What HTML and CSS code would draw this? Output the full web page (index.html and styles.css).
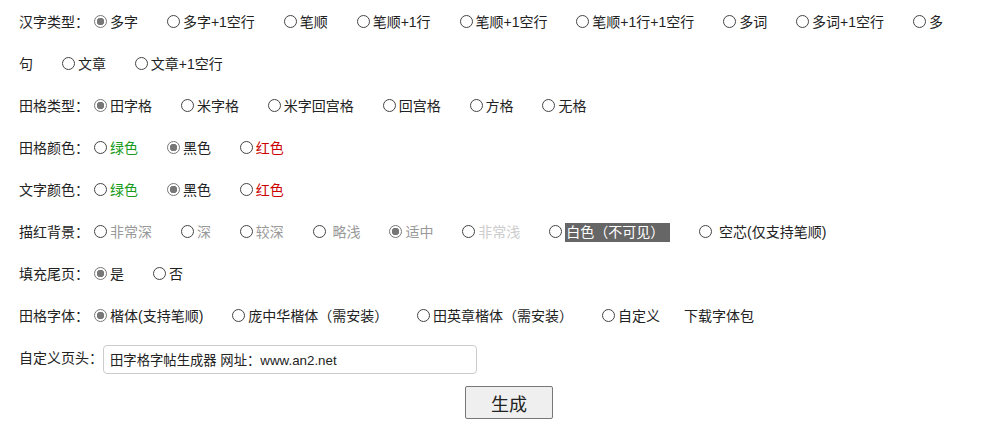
FILE: index.html
```html
<!DOCTYPE html>
<html lang="zh-CN">
<head>
  <meta charset="UTF-8" />
  <meta name="viewport" content="width=device-width, initial-scale=1.0"/>
  <title>田字格字帖生成器</title>
  <link rel="stylesheet" href="styles.css">
</head>
<body>
  <div class="form">
    <div class="row">
      <span class="title">汉字类型：</span><label class="opt"><input type="radio" name="hzlx" checked>多字</label>
      <label class="opt"><input type="radio" name="hzlx">多字+1空行</label>
      <label class="opt"><input type="radio" name="hzlx">笔顺</label>
      <label class="opt"><input type="radio" name="hzlx">笔顺+1行</label>
      <label class="opt"><input type="radio" name="hzlx">笔顺+1空行</label>
      <label class="opt"><input type="radio" name="hzlx">笔顺+1行+1空行</label>
      <label class="opt"><input type="radio" name="hzlx">多词</label>
      <label class="opt"><input type="radio" name="hzlx">多词+1空行</label>
      <label class="opt"><input type="radio" name="hzlx">多句</label>
      <label class="opt"><input type="radio" name="hzlx">文章</label>
      <label class="opt"><input type="radio" name="hzlx">文章+1空行</label>
    </div>

    <div class="row">
      <span class="title">田格类型：</span><label class="opt"><input type="radio" name="tglx" checked>田字格</label>
      <label class="opt"><input type="radio" name="tglx">米字格</label>
      <label class="opt"><input type="radio" name="tglx">米字回宫格</label>
      <label class="opt"><input type="radio" name="tglx">回宫格</label>
      <label class="opt"><input type="radio" name="tglx">方格</label>
      <label class="opt"><input type="radio" name="tglx">无格</label>
    </div>

    <div class="row">
      <span class="title">田格颜色：</span><label class="opt"><input type="radio" name="tgys"><span class="green">绿色</span></label>
      <label class="opt"><input type="radio" name="tgys" checked>黑色</label>
      <label class="opt"><input type="radio" name="tgys"><span class="red">红色</span></label>
    </div>

    <div class="row">
      <span class="title">文字颜色：</span><label class="opt"><input type="radio" name="wzys"><span class="green">绿色</span></label>
      <label class="opt"><input type="radio" name="wzys" checked>黑色</label>
      <label class="opt"><input type="radio" name="wzys"><span class="red">红色</span></label>
    </div>

    <div class="row">
      <span class="title">描红背景：</span><label class="opt"><input type="radio" name="mhbj"><span class="gray">非常深</span></label>
      <label class="opt"><input type="radio" name="mhbj"><span class="gray">深</span></label>
      <label class="opt"><input type="radio" name="mhbj"><span class="gray">较深</span></label>
      <label class="opt"><input type="radio" name="mhbj"><span class="gray">&nbsp;略浅</span></label>
      <label class="opt"><input type="radio" name="mhbj" checked><span class="gray">适中</span></label>
      <label class="opt"><input type="radio" name="mhbj"><span class="light">非常浅</span></label>
      <label class="opt"><input type="radio" name="mhbj"><span class="white">白色（不可见）</span></label>
      <label class="opt"><input type="radio" name="mhbj">&nbsp;空芯(仅支持笔顺)</label>
    </div>

    <div class="row">
      <span class="title">填充尾页：</span><label class="opt"><input type="radio" name="tcwy" checked>是</label>
      <label class="opt"><input type="radio" name="tcwy">否</label>
    </div>

    <div class="row">
      <span class="title">田格字体：</span><label class="opt"><input type="radio" name="tgzt" checked>楷体(支持笔顺)</label>
      <label class="opt"><input type="radio" name="tgzt">庞中华楷体（需安装）</label>
      <label class="opt"><input type="radio" name="tgzt">田英章楷体（需安装）</label>
      <label class="opt"><input type="radio" name="tgzt">自定义</label>
      <a class="download" href="#">下载字体包</a>
    </div>

    <div class="row">
      <span class="title">自定义页头：</span><input type="text" class="header_input" value="田字格字帖生成器 网址：www.an2.net">
    </div>

    <div class="actions">
      <button type="button">生成</button>
    </div>
  </div>
</body>
</html>
```

FILE: styles.css
```css
body {
  margin: 0;
  font-family: "Liberation Sans", "Noto Sans CJK SC", sans-serif;
  font-size: 14px;
  color: #222;
  background: #fff;
}
.form {
  width: 956px;
  padding: 1px 0 0 19px;
}
.row {
  line-height: 42px;
}
.opt {
  margin-right: 20px;
}
input[type="radio"] {
  appearance: none;
  -webkit-appearance: none;
  width: 13px;
  height: 13px;
  margin: 0 3px 0 5px;
  border: 1px solid #444;
  border-radius: 50%;
  background: #fff;
  vertical-align: -1px;
  box-sizing: border-box;
}
input[type="radio"]:checked {
  border-color: #777;
  background: radial-gradient(circle, #777 0, #777 3.5px, #fff 4px);
}
.green {
  color: #1a9a1a;
}
.red {
  color: #c00;
}
.gray {
  color: #999;
}
.light {
  color: #ccc;
}
.white {
  display: inline-block;
  line-height: 19px;
  background: #666;
  color: #fff;
  padding: 0 6px 0 1px;
}
.download {
  color: #222;
  text-decoration: none;
}
.header_input {
  width: 374px;
  height: 29px;
  box-sizing: border-box;
  padding: 0 6px;
  border: 1px solid #ccc;
  border-radius: 4px;
  font-family: "Liberation Sans", "Noto Sans CJK SC", sans-serif;
  font-size: 13.33px;
  color: #222;
  vertical-align: middle;
}
.actions {
  padding: 7px 0 0 0;
  text-align: center;
  margin-left: 24px;
}
button {
  width: 88px;
  height: 33px;
  font-family: "Liberation Sans", "Noto Sans CJK SC", sans-serif;
  font-size: 18px;
  color: #222;
  background: #efefef;
  border: 1px solid #777;
  border-radius: 2px;
  cursor: pointer;
}
button:hover {
  background: #e5e5e5;
}
```
